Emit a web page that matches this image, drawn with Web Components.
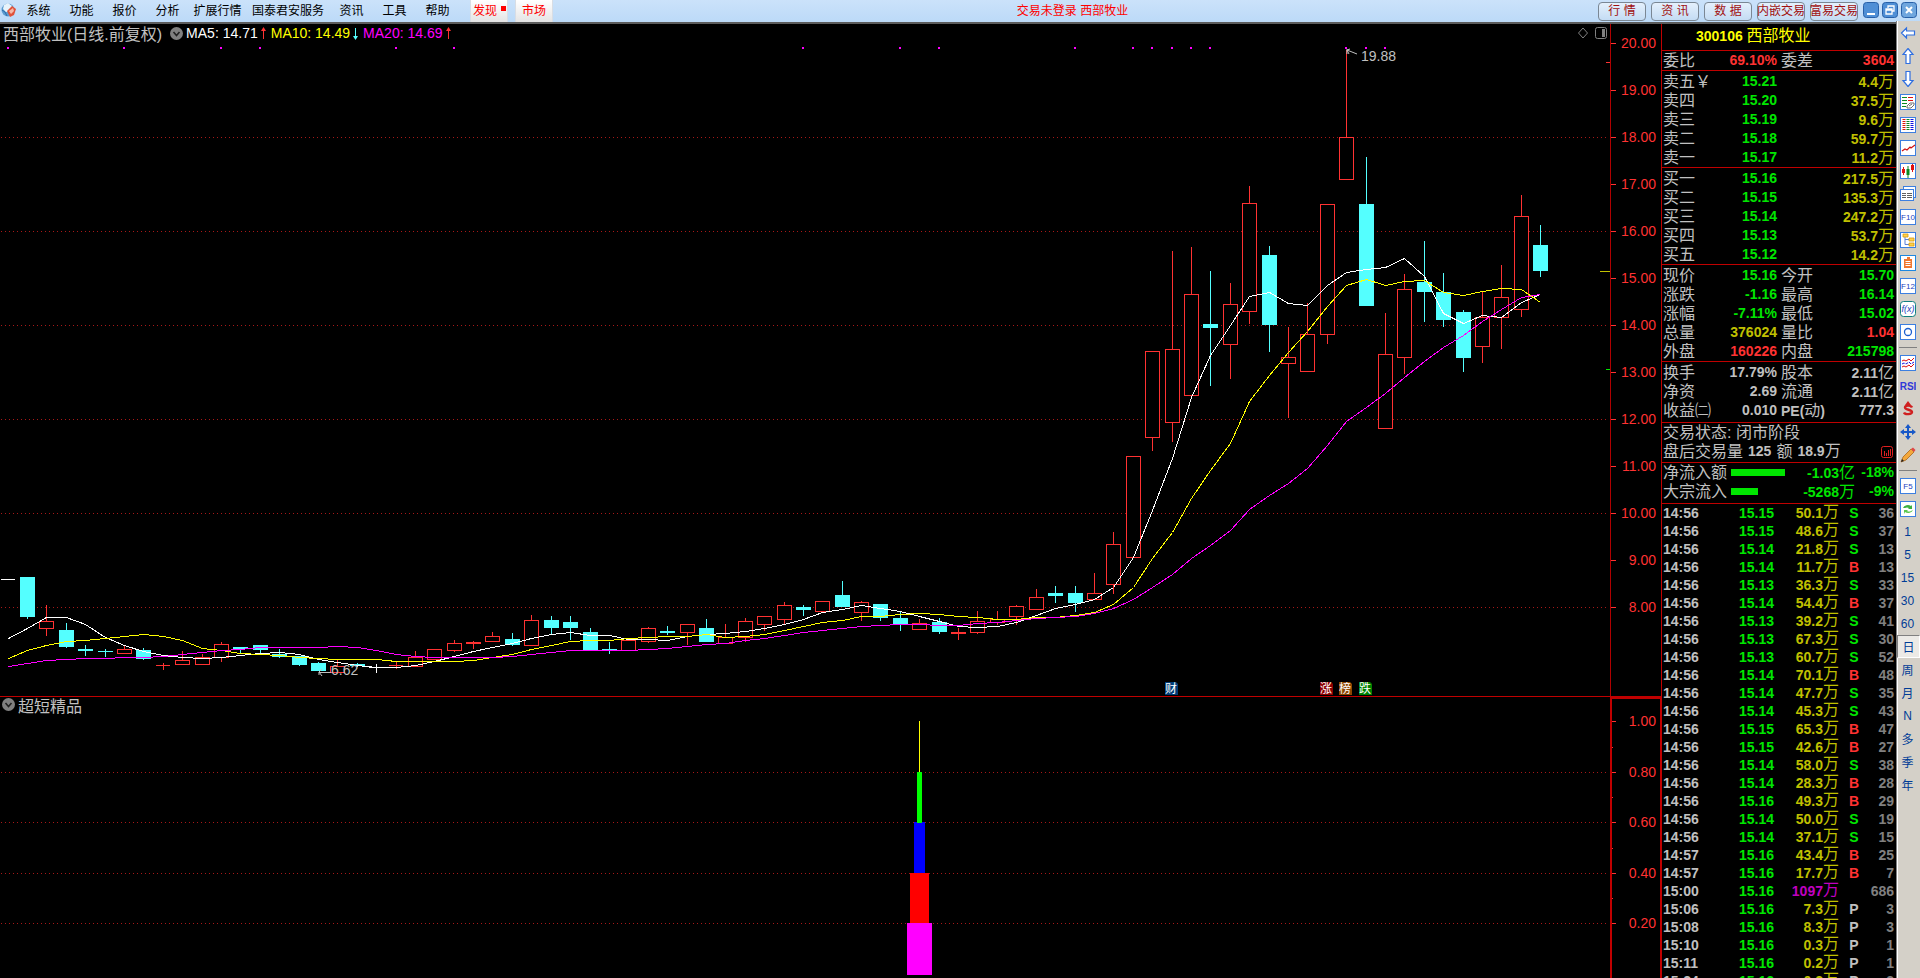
<!DOCTYPE html>
<html lang="zh-CN">
<head>
<meta charset="utf-8">
<title>西部牧业 300106</title>
<style>
html, body { margin: 0; height: 100%; background: #000; }
body { font-family: "Liberation Sans", "Noto Sans CJK SC", sans-serif; font-size: 14px; color: #c0c0c0; overflow: hidden; }
</style>
</head>
<body>
<trade-app></trade-app>
<script>
const define = (name, css, html, setup) => customElements.define(name, class extends HTMLElement {
  connectedCallback() {
    if (this.shadowRoot) return;
    const root = this.attachShadow({ mode: 'open' });
    const t = document.createElement('template');
    t.innerHTML = `<style>*{box-sizing:border-box}${css}</style>${typeof html === 'function' ? html(this) : html}`;
    root.append(t.content.cloneNode(true));
    if (setup) setup(this, root);
  }
});

/* Digits are bold 14px, Chinese characters regular 16px */
const mix = s => s.replace(/[\u3200-\u32ff\u4e00-\u9fff\uffe5]+/g, m => `<i>${m}</i>`);

/* ---------- menu bar ---------- */
define('menu-bar', `
:host { display: flex; height: 24px; border-bottom: 2px solid #5c5c5c; background: linear-gradient(#cbe2fa, #bcdaf8); font-size: 12px; color: #000; }
nav { display: flex; padding-left: 1px; }
button, a { font: inherit; color: inherit; background: none; border: 0; padding: 0; margin: 0; white-space: nowrap; text-decoration: none; line-height: 18px; }
.logo { width: 16px; height: 16px; margin-top: 2px; }
nav button { width: 43px; height: 22px; }
nav .w4 { width: 57px; } nav .w6 { width: 84px; }
.tab { display: flex; align-items: center; width: 38px; height: 22px; padding: 0 2px; margin-left: 7px; color: #f00; background: linear-gradient(#fff, #e4e4e4); border: 1px solid #d8dde4; border-width: 0 1px; }
.tab.mid { justify-content: center; }
.tab:first-of-type { margin-left: 11px; }
.tab svg { flex: none; margin: 0 0 6px 4px; }
.status { flex: 1; text-align: center; color: #f00; padding-right: 6px; line-height: 22px; }
.right { display: flex; gap: 5px; padding: 2px 3px 0 0; }
.right .b { width: 48px; height: 19px; border: 1px solid #7a8794; border-radius: 4px; background: linear-gradient(#e4f0fc, #c4dcf4); color: #a01010; line-height: 17px; display: flex; justify-content: center; }
.win { display: flex; gap: 3px; }
.win button { width: 16px; height: 16px; line-height: 0; }
`, `
<nav>
<svg class="logo" viewBox="0 0 16 16"><circle cx="7" cy="8" r="6.5" fill="#5b9bd0"/><path d="M3 3l4-2 4 3-1 5-5 1-3-3z" fill="#e8f3fb"/><path d="M6 9l5-5 4 3-2 6-4 2z" fill="#e0523a"/><path d="M8 9l4-3 1 3-3 3z" fill="#f6b8a8"/><path d="M1 8l3 2 2 4" stroke="#2c6ca8" fill="none"/></svg>
<button>系统</button><button>功能</button><button>报价</button><button>分析</button><button class="w4">扩展行情</button><button class="w6">国泰君安服务</button><button>资讯</button><button>工具</button><button>帮助</button>
<a class="tab" href="#find">发现<svg width="5" height="5"><rect width="5" height="5" fill="#f00"/></svg></a><a class="tab mid" href="#market">市场</a>
</nav>
<span class="status">交易未登录 西部牧业</span>
<div class="right">
<button class="b">行 情</button><button class="b">资 讯</button><button class="b">数 据</button><button class="b">内嵌交易</button><button class="b">富易交易</button>
<div class="win">
<button aria-label="最小化"><svg width="16" height="16"><rect x=".5" y=".5" width="15" height="15" rx="3" fill="#4f8fd6" stroke="#2860a8"/><path d="M4 12h8" stroke="#fff" stroke-width="2"/></svg></button>
<button aria-label="还原"><svg width="16" height="16"><rect x=".5" y=".5" width="15" height="15" rx="3" fill="#4f8fd6" stroke="#2860a8"/><path d="M6 6V4h6v5h-2M4 7h6v5H4zM4 8h6" stroke="#fff" fill="none" stroke-width="1.3"/></svg></button>
<button aria-label="关闭"><svg width="16" height="16"><rect x=".5" y=".5" width="15" height="15" rx="3" fill="#6fa6de" stroke="#2860a8"/><path d="M5 5l6 6M11 5l-6 6" stroke="#fff" stroke-width="2"/></svg></button>
</div></div>`);

/* ---------- chart data: kind, high, body top, body bottom, low (chart units) ---------- */
const candles = `w 579 579 579 579|d 577 577 617 619|u 605 621 628 636|d 623 630 647 648|d 645 649 651 656|d 649 651 652 657|u 645 649 653 654|d 648 650 659 660|u 663 665 665 669|u 651 660 664 665|u 654 657 664 664|u 642 644 657 662|d 647 647 649 653|d 645 645 650 654|d 649 654 657 658|d 656 656 665 666|d 662 663 671 671|u 660 666 672 672|d 663 664 666 667|w 664 667 667 672|u 662 665 665 668|u 651 657 666 667|u 649 649 659 659|u 640 643 650 652|u 641 642 643 649|u 632 636 641 642|d 633 639 645 646|u 615 620 645 645|d 616 620 628 634|d 616 622 628 640|d 628 632 650 650|d 642 649 650 654|u 640 640 650 650|u 627 628 641 643|d 626 631 633 635|u 624 624 632 645|d 619 628 642 642|u 624 637 643 643|u 618 621 637 642|u 616 616 624 631|u 602 605 619 624|d 605 607 610 616|u 601 601 611 611|d 581 595 607 607|u 601 602 612 621|d 604 604 618 621|d 612 618 625 631|u 619 623 629 629|d 618 622 632 634|u 628 632 633 640|u 611 621 632 634|u 611 619 622 625|u 605 606 616 625|u 589 597 609 609|d 586 593 596 603|d 586 593 603 612|u 573 593 599 599|u 532 544 584 594|u 456 456 557 557|u 351 351 437 451|u 251 349 422 442|u 247 294 395 395|d 271 324 328 386|u 283 304 344 379|u 186 203 311 324|d 246 255 325 352|u 327 357 363 418|u 303 334 371 371|u 204 204 334 344|u 50 137 179 179|d 157 204 306 306|u 313 354 428 428|u 274 289 357 374|d 241 282 292 322|d 273 292 320 327|d 310 312 358 372|u 292 317 346 363|u 265 297 317 349|u 195 216 309 317|d 225 245 271 277`.split('|').map(s => { const [k, ...v] = s.split(' '); return [k, ...v.map(Number)]; });
const averages = [
  ['#fff', '638 628 617 617 624 637 645 651 655 657 658 657 655 653 652 654 659 662 665 667 667 665 661 656 651 647 643 638 634 632 635 635 639 639 640 636 634 633 631 628 624 619 612 609 605 608 611 616 621 626 627 626 622 615 608 604 599 587 557 510 458 397 355 325 296 292 303 305 285 272 269 267 258 276 313 323 315 317 302 294'],
  ['#ff0', '658 650 645 641 640 638 636 634 636 640 648 650 653 654 655 657 658 659 659 659 661 661 661 661 660 657 654 649 645 641 640 640 638 637 636 636 634 637 636 634 630 626 622 620 616 616 614 613 614 616 617 619 619 617 617 615 612 604 587 558 532 498 470 443 401 375 352 331 306 285 279 285 281 280 292 295 291 288 289 302'],
  ['#f0f', '666 663 660 659 658 658 657 657 656 654 652 650 649 647 647 647 647 646 647 650 654 656 657 657 657 657 656 654 652 650 650 650 650 649 648 646 644 643 640 638 635 632 630 628 626 625 624 624 625 625 623 622 620 618 617 616 613 608 599 587 574 558 545 530 509 495 483 468 445 421 407 393 377 361 347 335 321 309 297 294']
];
const signals = [0, 6, 11, 13, 20, 23, 41, 46, 48, 55, 58, 59, 60, 61, 62, 69, 70, 71];
const cx = i => Math.floor(8 + 19.4 * i);
const gridline = y => `<path d="M1 ${y}.5H1609" stroke="#a81818" stroke-dasharray="1 3"/>`;

function candle([k, h, t, b, l], i) {
  const x = cx(i), m = x + .5, c = k === 'u' ? '#ff3232' : k === 'd' ? '#54ffff' : '#fff';
  if (k === 'd') return `<path d="M${m} ${h}V${l}" stroke="${c}"/><rect x="${x - 7}" y="${t}" width="15" height="${Math.max(1, b - t)}" fill="${c}"/>`;
  if (t === b) return `<path d="M${m} ${h}V${l + (l > h ? 1 : 0)}M${x - 7} ${t}.5h14" stroke="${c}"/>`;
  return `<path d="M${m} ${h}V${t}M${m} ${b}V${l}" stroke="${c}"/><rect x="${x - 7 + .5}" y="${t}.5" width="14" height="${b - t}" fill="#000" stroke="${c}"/>`;
}
const chevron = `<svg width="13" height="13" viewBox="0 0 13 13"><circle cx="6.5" cy="6.5" r="6.5" fill="#808080"/><path d="M3.5 5l3 3.5 3-3.5" stroke="#222" stroke-width="1.6" fill="none"/></svg>`;
const arrow = (c, down) => `<svg width="7" height="13" viewBox="0 0 7 13"><path ${down ? 'transform="rotate(180 3.5 6.5)"' : ''} d="M3 12V4H1L3.500 0 6 4H4v8z" fill="${c}"/></svg>`;
const chartCss = `
:host { display: flex; min-width: 0; min-height: 0; }
.plot { flex: 1; min-width: 0; display: flex; flex-direction: column; }
header { height: 18px; display: flex; align-items: center; padding-left: 2px; white-space: nowrap; }
.area { flex: 1; min-height: 0; }
.area svg { display: block; width: 100%; height: 100%; }
.axis { width: 51px; border-left: 1px solid #b00000; }
.axis svg { display: block; width: 100%; height: 100%; }
text { font-size: 14px; }
.axis text { fill: #ff3232; text-anchor: end; }`;

define('price-chart', chartCss + `
:host { flex: 672; border-bottom: 1px solid #c00000; }
h1 { font-size: 16px; font-weight: 400; margin: 0 6px 0 1px; }
.v { margin-left: 4px; } .v:first-of-type { margin-left: 3px; }
header svg { flex: none; margin-left: 2px; }
.tools { margin-left: auto; display: flex; gap: 4px; padding-right: 3px; align-items: center; }
.mark { font-size: 12px; fill: #fff; text-anchor: middle; }
.note { fill: #c0c0c0; }
`, () => {
  const lines = averages.map(([c, d]) => `<polyline fill="none" stroke="${c}" points="${d.split(' ').map((y, i) => `${cx(i) + .5},${y}.5`).join(' ')}"/>`).join('');
  const marks = [[1165, '财', '#003c78'], [1320, '涨', '#8c0000'], [1339, '榜', '#8c4600'], [1359, '跌', '#008000']]
    .map(([x, s, c]) => `<path d="M${x} 682h11l2 2v11h-13z" fill="${c}"/><text class="mark" x="${x + 6}" y="693">${s}</text>`).join('');
  let ticks = '';
  for (let p = 20; p >= 8; p--) { const y = 43 + (20 - p) * 47; ticks += `<path d="M0 ${y}.5h5" stroke="#ff3232"/><text x="45" y="${y + 5}">${p}.00</text>`; }
  return `<section class="plot"><header><h1>西部牧业(日线.前复权)</h1>${chevron}
<span class="v" style="color:#fff">MA5: 14.71</span>${arrow('#ff3232')}
<span class="v" style="color:#ff0">MA10: 14.49</span>${arrow('#54ffff', true)}
<span class="v" style="color:#f0f">MA20: 14.69</span>${arrow('#ff3232')}
<span class="tools"><svg width="12" height="12"><path d="M6 1l4.500 5L6 11 1.500 6z" fill="none" stroke="#808080"/></svg><svg width="12" height="12"><rect x=".5" y=".5" width="11" height="11" rx="2" fill="none" stroke="#808080"/><rect x="7" y="2" width="3" height="8" fill="#808080"/></svg></span>
</header><div class="area"><svg viewBox="0 42 1610 654" preserveAspectRatio="xMinYMin"><g shape-rendering="crispEdges">
${[137, 231, 325, 419, 513, 607].map(gridline).join('')}
${candles.map(candle).join('')}${lines}
${signals.map(i => `<rect x="${cx(i) - 1}" y="47" width="2" height="2" fill="#f0f"/>`).join('')}
<path d="M1600 271.500h10" stroke="#c0c000"/><path d="M1606 369.500h4" stroke="#00e600"/><path d="M1606 62.500h4" stroke="#ff3232"/></g>
${marks}
<path d="M1347 49v5M1347 50l3-1M1347 50l2 4M1347 50l10 4" stroke="#c0c0c0" fill="none"/><text class="note" x="1361" y="61">19.88</text>
<path d="M319 672.500h12M319 672l3 4M319 672v3M319 672l3-3" stroke="#c0c0c0" fill="none"/><text class="note" x="331" y="675">6.62</text>
</svg></div></section>
<div class="axis"><svg viewBox="0 24 50 672" preserveAspectRatio="xMinYMin">${ticks}</svg></div>`;
});

define('indicator-chart', chartCss + `
:host { flex: 281; }
header { padding-bottom: 3px; }
h2 { font-size: 16px; font-weight: 400; margin: 0 0 0 3px; }
.axis { border: 2px solid #c00000; border-width: 2px 1px 0 2px; }
`, () => {
  const labels = [[721, '1.00'], [772, '0.80'], [822, '0.60'], [873, '0.40'], [923, '0.20']];
  const bars = [[919, 1, 721, 772, '#ff0'], [914, 11, 822, 874, '#00f'], [917, 5, 772, 823, '#0f0'], [910, 19, 873, 924, '#f00'], [907, 25, 923, 975, '#f0f']];
  return `<section class="plot"><header>${chevron}<h2>超短精品</h2></header><div class="area">
<svg viewBox="0 715 1610 263" preserveAspectRatio="xMinYMin" shape-rendering="crispEdges">${[772, 822, 873, 923].map(gridline).join('')}
${bars.map(([x, w, a, b, c]) => `<rect x="${x}" y="${a}" width="${w}" height="${b - a}" fill="${c}"/>`).join('')}</svg></div></section>
<div class="axis"><svg viewBox="0 699 48 279" preserveAspectRatio="xMinYMin">
${labels.map(([y, s]) => `<path d="M0 ${y}.5h4" stroke="#ff3232"/><text x="44" y="${y + 5}">${s}</text>`).join('')}
${[747, 797, 848, 898].map(y => `<path d="M0 ${y}.5h1" stroke="#ff3232"/>`).join('')}</svg></div>`;
});

/* ---------- quote panel ---------- */
define('quote-section', `
:host { display: block; border-top: 1px solid #c00000; padding: var(--pad, 0) 2px var(--end, 0) 1px; }`, `<slot></slot>`);

define('quote-panel', `
:host { display: block; width: 235px; min-height: 0; overflow: hidden; border-left: 1px solid #c00000; font-weight: 700; }
i { font-style: normal; font-weight: 400; font-size: 16px; line-height: 16px; }
h2 { height: 26px; margin: 0; line-height: 25px; font-size: 14px; color: #ff0; padding-left: 34px; }
.r { display: flex; height: 19px; line-height: 19px; white-space: nowrap; gap: 4px; }
.r > div { display: flex; justify-content: space-between; align-items: center; flex: 1; }
.r > div:first-child { flex: none; width: 114px; }
.r i { line-height: 19px; }
.g { color: #00e600; } .y { color: #c0c000; } .d { color: #ff3232; } .m { color: #c000c0; } .k { color: #808080; }
.text { height: 19px; line-height: 19px; display: flex; gap: 5px; align-items: center; white-space: nowrap; }
.text svg { margin-left: auto; margin-right: 1px; }
.flow { display: grid; grid-template: 19px / 68px 1fr 62px 39px; line-height: 19px; align-items: center; white-space: nowrap; }
.flow i { line-height: 19px; }
.flow > :nth-child(n+3) { text-align: right; }
.bar { height: 7px; background: #00e600; }
table { border-collapse: collapse; table-layout: fixed; width: 100%; }
td { height: 18px; padding: 0; line-height: 18px; text-align: right; white-space: nowrap; }
td i { vertical-align: top; }
td:first-child { text-align: left; } td:nth-child(4) { text-align: center; }
`, () => {
  const pair = (a, av, ac, b, bv, bc) => `<div class="r"><div><span>${mix(a)}</span><span class="${ac}">${mix(av)}</span></div><div><span>${mix(b)}</span><span class="${bc}">${mix(bv)}</span></div></div>`;
  const book = s => s.split('|').map(r => { const [a, p, v] = r.split(' '); return pair(a, p, 'g', '', v, 'y'); }).join('');
  const ticks = `14:56 15.15 50.1万 S 36|14:56 15.15 48.6万 S 37|14:56 15.14 21.8万 S 13|14:56 15.14 11.7万 B 13|14:56 15.13 36.3万 S 33|14:56 15.14 54.4万 B 37|14:56 15.13 39.2万 S 41|14:56 15.13 67.3万 S 30|14:56 15.13 60.7万 S 52|14:56 15.14 70.1万 B 48|14:56 15.14 47.7万 S 35|14:56 15.14 45.3万 S 43|14:56 15.15 65.3万 B 47|14:56 15.15 42.6万 B 27|14:56 15.14 58.0万 S 38|14:56 15.14 28.3万 B 28|14:56 15.16 49.3万 B 29|14:56 15.14 50.0万 S 19|14:56 15.14 37.1万 S 15|14:57 15.16 43.4万 B 25|14:57 15.16 17.7万 B 7|15:00 15.16 1097万 - 686|15:06 15.16 7.3万 P 3|15:08 15.16 8.3万 P 3|15:10 15.16 0.3万 P 1|15:11 15.16 0.2万 P 1|15:24 15.16 0.2万 P 2`
    .split('|').map(r => { const [t, p, v, f, n] = r.split(' '); return `<tr><td>${t}</td><td class="g">${p}</td><td class="${f === '-' ? 'm' : 'y'}">${mix(v)}</td><td class="${{ S: 'g', B: 'd' }[f] || ''}">${f === '-' ? '' : f}</td><td class="k">${n}</td></tr>`; }).join('');
  return `<h2>300106 <i>西部牧业</i></h2>
<quote-section>${pair('委比', '69.10%', 'd', '委差', '3604', 'd')}</quote-section>
<quote-section style="--pad:1px">${book('卖五￥ 15.21 4.4万|卖四 15.20 37.5万|卖三 15.19 9.6万|卖二 15.18 59.7万|卖一 15.17 11.2万')}</quote-section>
<quote-section style="--pad:1px">${book('买一 15.16 217.5万|买二 15.15 135.3万|买三 15.14 247.2万|买四 15.13 53.7万|买五 15.12 14.2万')}</quote-section>
<quote-section style="--pad:1px">${pair('现价', '15.16', 'g', '今开', '15.70', 'g')}${pair('涨跌', '-1.16', 'g', '最高', '16.14', 'g')}${pair('涨幅', '-7.11%', 'g', '最低', '15.02', 'g')}${pair('总量', '376024', 'y', '量比', '1.04', 'd')}${pair('外盘', '160226', 'd', '内盘', '215798', 'g')}</quote-section>
<quote-section style="--pad:1px;--end:2px">${pair('换手', '17.79%', '', '股本', '2.11亿', '')}${pair('净资', '2.69', '', '流通', '2.11亿', '')}${pair('收益㈡', '0.010', '', 'PE(动)', '777.3', '')}</quote-section>
<quote-section style="--end:1px"><div class="text"><i>交易状态: 闭市阶段</i></div><div class="text"><i>盘后交易量</i><span>125</span><i>额</i><span>18.9<i>万</i></span>
<svg width="12" height="12"><rect x=".5" y=".5" width="11" height="11" rx="2" fill="none" stroke="#e02020"/><path d="M3.500 5v5M5.500 7v3M7.500 4v6M9.500 3v7" stroke="#e02020"/></svg></div></quote-section>
<quote-section style="--end:2px"><div class="flow"><i>净流入额</i><div class="bar" style="width:54px"></div><span class="g">${mix('-1.03亿')}</span><span class="g">-18%</span></div>
<div class="flow"><i>大宗流入</i><div class="bar" style="width:27px"></div><span class="g">${mix('-5268万')}</span><span class="g">-9%</span></div></quote-section>
<quote-section><table><colgroup><col style="width:50px"><col style="width:61px"><col style="width:65px"><col style="width:30px"><col></colgroup><tbody>${ticks}</tbody></table></quote-section>`;
});

/* ---------- right toolbar ---------- */
const frame = (inner, c = '#3c7fe0') => `<rect x=".5" y=".5" width="15" height="15" fill="#fff" stroke="${c}"/>${inner}`;
const word = (s, c = '#1c3fc0') => `<text x="8" y="11" font-size="8" text-anchor="middle" fill="${c}">${s}</text>`;
const big = d => `<path d="${d}" fill="#fff" stroke="#2f6fe0" stroke-width="1.200"/>`;
const icons = [
  ['后退', big('M1.500 8l5-5v3h8v4h-8v3z')], ['上翻', big('M8 .500l5 6h-3v9H6v-9H3z')], ['下翻', big('M8 15.500l5-6h-3v-9H6v9H3z')],
  ['报价', frame('<path d="M2 3.500h5M2 6.500h5M2 9.500h5M2 12.500h4" stroke="#0a8a20"/><path d="M8 3.500h5M8 6.500h5" stroke="#e01010"/><path d="M7 12l3-3h4v2l-3 3H7zM9 12l3-2" fill="#fff" stroke="#707070"/>')],
  ['列表', frame('<g stroke-dasharray="1 1" stroke-width="3"><path d="M4 2v12" stroke="#e01010"/><path d="M8 2v12" stroke="#0a8a20"/><path d="M12 2v12" stroke="#1010e0"/></g>')],
  ['分时', frame('<path d="M2 11l3-2 2 1 3-3 1 1 4-3" stroke="#d01010" stroke-width="1.200" fill="none"/>')],
  ['K线', frame('<path d="M3.500 4v8M12.500 1v8" stroke="#e01010"/><path d="M8 3v12" stroke="#0a8a20"/><path d="M2 6h3v4H2zM11 2h3v5h-3z" fill="#e01010"/><path d="M6.500 6h3v6h-3z" fill="#0a8a20"/>')],
  ['资料', '<rect x="3.500" y=".500" width="12" height="11" fill="#fff" stroke="#3c7fe0"/><rect x=".500" y="3.500" width="13" height="11" fill="#fff" stroke="#3c7fe0"/><path d="M2 7.500h4M7 7.500h5M2 9.500h4M7 9.500h5M2 11.500h4M7 11.500h5" stroke="#606060"/>'],
  ['F10', frame(word('F10'))],
  ['板块', frame('<path d="M5 4v8.500h5M5 7.500h5" stroke="#5a80d8" fill="none"/><path d="M3 2h5v3H3zM9 6h5v3H9zM9 11h5v3H9z" fill="#ffd24a" stroke="#d89a10" stroke-width=".800"/>')],
  ['自选', frame('<path d="M4 4h8v9H4zM7 2h3v2H7z" fill="#f07830"/><path d="M5.500 6.500h5M5.500 8.500h5M5.500 10.500h5" stroke="#fff"/>', '#1e88e0')],
  ['F12', frame(word('F12'))],
  ['公式', `<rect x=".5" y=".5" width="15" height="15" rx="3" fill="#fff" stroke="#108080"/><text x="8" y="11" font-size="9" font-style="italic" text-anchor="middle" fill="#1c3fc0">f(x)</text>`],
  ['圆', frame('<circle cx="8" cy="8" r="3.500" fill="none" stroke="#1c60d0" stroke-width="1.300"/>')],
  null,
  ['叠加', frame('<path d="M2 6l2-1 2 1 3-2 2 2 3-3" stroke="#e01010" fill="none"/><path d="M2 9l2-1 2 1 3-2 2 2 3-2" stroke="#1010e0" fill="none" stroke-dasharray="3 1"/><path d="M2 12l2-1 2 1 3-2 2 2 3-3" stroke="#e01010" fill="none"/>')],
  ['RSI', `<text x="8" y="12" font-size="10" font-weight="700" text-anchor="middle" fill="#3038d8">RSI</text>`],
  ['除权', '<path d="M12 6.500C11 4 5 4 5 6.500s7 2 7 4.500-7 3-8 .500" stroke="#d02020" stroke-width="2.400" fill="none"/><path d="M8 0L5 4h6z" fill="#d02020"/>'],
  ['移动', '<path d="M8 0l3 4H9v3h3V5l4 3-4 3V9H9v3h2l-3 4-3-4h2V9H4v2L0 8l4-3v2h3V4H5z" fill="#1858c8"/>'],
  ['画线', '<path d="M1 15l2-5 8-8 3 3-8 8z" fill="#f4a83c" stroke="#a05a10" stroke-width=".700"/><path d="M11 2l2-1.500 2.500 2.500L14 5z" fill="#e04848"/><path d="M1 15l1-3 2 2z" fill="#222"/>'],
  null,
  ['F5', frame(word('F5'))],
  ['刷新', frame('<path d="M3 7a5 4 0 0 1 8-2l1-1v4H8l1-1a3 2 0 0 0-4 0z" fill="#3db040"/><path d="M13 9a5 4 0 0 1-8 2l-1 2V9h4l-1 1a3 2 0 0 0 4 0z" fill="#5cc850"/>')]
];
define('tool-bar', `
:host { display: flex; flex-direction: column; width: 24px; background: #d4d0c8; border-left: 1px solid #808080; box-shadow: inset 1px 0 #fff; margin-top: -3px; }
button { height: 23px; width: 21px; margin: 0; padding: 0; border: 0; background: none; font: 12px "Liberation Sans", "Noto Sans CJK SC", sans-serif; color: #003c96; display: flex; align-items: center; justify-content: center; flex: none; }
button.on { width: 23px; background: #eceae6; border: 1px solid #808080; border-right-color: #fff; border-bottom-color: #fff; }
hr { flex: none; width: 18px; height: 8px; margin: 0 0 0 2px; border: 0; background: linear-gradient(#808080, #808080) 0 4px / 100% 1px no-repeat; }
`, () => icons.map(ic => ic ? `<button aria-label="${ic[0]}"><svg width="16" height="16" viewBox="0 0 16 16">${ic[1]}</svg></button>` : '<hr>').join('')
  + ['1', '5', '15', '30', '60', '日', '周', '月', 'N', '多', '季', '年'].map(s => `<button${s === '日' ? ' class="on"' : ''}>${s}</button>`).join(''));

define('trade-app', `
:host { display: flex; flex-direction: column; height: 100vh; overflow: hidden; background: #000; }
main { flex: 1; min-height: 0; display: flex; }
.charts { flex: 1; min-width: 0; display: flex; flex-direction: column; }
`, `<menu-bar></menu-bar><main><div class="charts"><price-chart></price-chart><indicator-chart></indicator-chart></div><quote-panel></quote-panel><tool-bar></tool-bar></main>`);
</script>
</body>
</html>
